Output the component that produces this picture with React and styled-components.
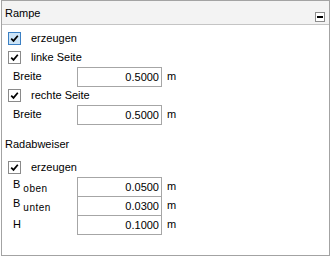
import React from "react";
import styled, { createGlobalStyle } from "styled-components";

const Global = createGlobalStyle`
  html, body { margin: 0; padding: 0; background: #ffffff; }
  body { font-family: "Liberation Sans", Arial, sans-serif; font-size: 11px; color: #000; }
`;

const Panel = styled.div`
  box-sizing: border-box;
  width: 329px;
  height: 256px;
  margin-left: 1px;
  border: 1px solid #a3a3a3;
  background: #fff;
  display: flex;
  flex-direction: column;
`;

const Header = styled.div`
  box-sizing: border-box;
  height: 24px;
  flex: none;
  background: #f3f3f3;
  border-bottom: 1px solid #c4c4c4;
  display: flex;
  align-items: flex-start;
  justify-content: space-between;
  padding: 6px 4px 0 3px;
`;

const Title = styled.span`
  font-size: 11px;
  line-height: 13px;
`;

const Collapse = styled.button`
  box-sizing: border-box;
  width: 10px;
  height: 10px;
  margin-top: 5px;
  padding: 0;
  border: 1px solid #8c8c8c;
  background: #fff;
  display: flex;
  align-items: center;
  justify-content: center;
  &::after {
    content: "";
    width: 6px;
    height: 2px;
    background: #000;
  }
`;

const Body = styled.div`
  display: flex;
  flex-direction: column;
  padding: 4px 0 0 6px;
`;

const Row = styled.div`
  display: flex;
  align-items: ${(p) => (p.$top ? "flex-start" : "center")};
  height: 19px;
  margin-top: ${(p) => p.$mt || 0}px;
`;

const Box = styled.span`
  box-sizing: border-box;
  width: 13px;
  height: 13px;
  flex: none;
  border: 1px solid ${(p) => (p.$focus ? "#3b80c4" : "#8a8a8a")};
  background: ${(p) => (p.$focus ? "#cce4f7" : "#fff")};
  display: flex;
  align-items: center;
  justify-content: center;
  margin-right: 10px;
`;

const Text = styled.span`
  line-height: 13px;
  white-space: nowrap;
`;

const Heading = styled.span`
  margin-left: -3px;
  line-height: 13px;
`;

const Label = styled.span`
  box-sizing: border-box;
  width: 69px;
  padding-left: ${(p) => p.$pl || 5}px;
  flex: none;
  white-space: nowrap;
  align-self: center;
  line-height: 13px;
`;

const Sub = styled.span`
  font-size: 10px;
  letter-spacing: 0.5px;
  margin-left: 3px;
  vertical-align: -4px;
`;

const Field = styled.div`
  box-sizing: border-box;
  width: 85px;
  height: 20px;
  flex: none;
  border: 1px solid #a6a6a6;
  background: #fff;
  display: flex;
  align-items: center;
  justify-content: flex-end;
  padding-right: 2px;
  line-height: 13px;
`;

const Unit = styled.span`
  margin-left: 5px;
  align-self: center;
  line-height: 13px;
`;

function Check({ focus }) {
  return (
    <Box $focus={focus}>
      <svg width="9" height="9" viewBox="0 0 9 9">
        <path d="M1.2 4.6 L3.5 6.9 L7.8 1.8" fill="none" stroke="#000" strokeWidth="1.7" />
      </svg>
    </Box>
  );
}

function CheckRow({ label, focus, mt }) {
  return (
    <Row $mt={mt}>
      <Check focus={focus} />
      <Text>{label}</Text>
    </Row>
  );
}

function FieldRow({ label, value }) {
  return (
    <Row $top>
      <Label>{label}</Label>
      <Field>{value}</Field>
      <Unit>m</Unit>
    </Row>
  );
}

export default function App() {
  return (
    <>
      <Global />
      <Panel>
        <Header>
          <Title>Rampe</Title>
          <Collapse aria-label="einklappen" />
        </Header>
        <Body>
          <CheckRow label="erzeugen" focus />
          <CheckRow label="linke Seite" />
          <FieldRow label="Breite" value="0.5000" />
          <CheckRow label="rechte Seite" />
          <FieldRow label="Breite" value="0.5000" />
          <Row $mt={11}>
            <Heading>Radabweiser</Heading>
          </Row>
          <CheckRow label="erzeugen" mt={4} />
          <FieldRow
            label={
              <>
                B<Sub>oben</Sub>
              </>
            }
            value="0.0500"
          />
          <FieldRow
            label={
              <>
                B<Sub>unten</Sub>
              </>
            }
            value="0.0300"
          />
          <FieldRow label="H" value="0.1000" />
        </Body>
      </Panel>
    </>
  );
}
